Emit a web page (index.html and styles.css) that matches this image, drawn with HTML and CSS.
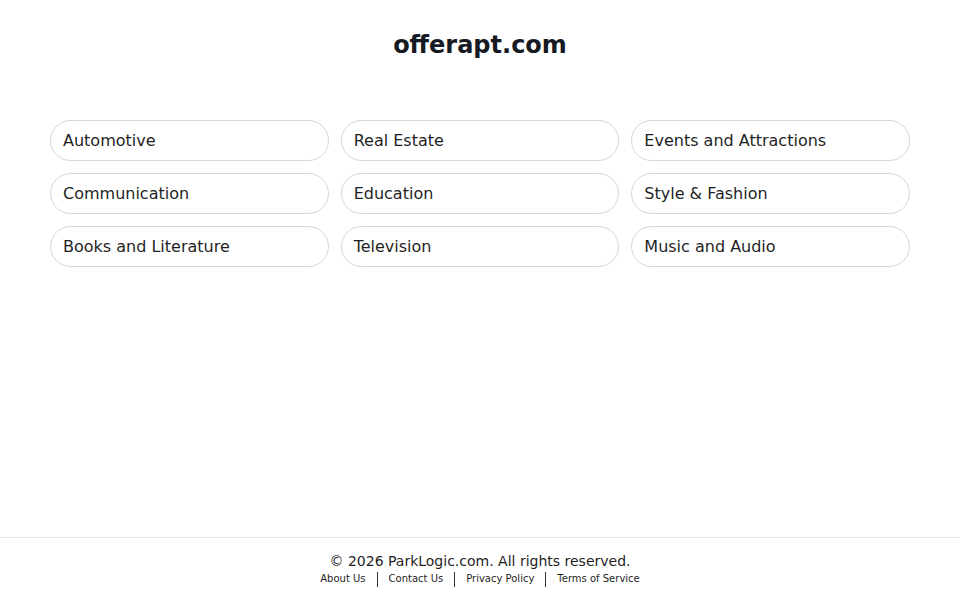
FILE: index.html
```html
<!DOCTYPE html>
<html lang="en">

<head>
    <meta charset="UTF-8">
    <meta name="viewport" content="width=device-width, initial-scale=1.0">
    <title>offerapt.com</title>
    <link rel="stylesheet" href="styles.css">
</head>

<body>
    <div class="page">
        <h1 class="domain">offerapt.com</h1>
        <div class="links">
            <a class="link-item" href="#">Automotive</a>
            <a class="link-item" href="#">Real Estate</a>
            <a class="link-item" href="#">Events and Attractions</a>
            <a class="link-item" href="#">Communication</a>
            <a class="link-item" href="#">Education</a>
            <a class="link-item" href="#">Style &amp; Fashion</a>
            <a class="link-item" href="#">Books and Literature</a>
            <a class="link-item" href="#">Television</a>
            <a class="link-item" href="#">Music and Audio</a>
        </div>
    </div>
    <footer class="footer">
        <div class="copy">© 2026 ParkLogic.com. All rights reserved.</div>
        <div class="footer-nav">
            <a href="#">About Us</a>
            <span class="sep"></span>
            <a href="#">Contact Us</a>
            <span class="sep"></span>
            <a href="#">Privacy Policy</a>
            <span class="sep"></span>
            <a href="#">Terms of Service</a>
        </div>
    </footer>
</body>

</html>
```

FILE: styles.css
```css
html,
body {
    margin: 0;
    height: 100%;
}

body {
    display: flex;
    flex-direction: column;
    font-family: "DejaVu Sans", sans-serif;
    color: #1f1f1f;
    background: #fff;
}

.page {
    flex: 1;
}

.domain {
    margin: 0;
    padding-top: 31px;
    font-size: 24px;
    line-height: 28px;
    font-weight: bold;
    text-align: center;
    color: #161a23;
}

.links {
    display: grid;
    grid-template-columns: repeat(3, 1fr);
    gap: 12px;
    max-width: 860px;
    margin: 61px auto 0;
}

.link-item {
    display: block;
    height: 39px;
    line-height: 39px;
    padding: 0 12px;
    border: 1px solid #d6d6d6;
    border-radius: 21px;
    font-size: 16px;
    color: #1f1f1f;
    text-decoration: none;
}

.footer {
    border-top: 1px solid #e6e6e6;
    height: 63px;
    box-sizing: border-box;
    padding-top: 13px;
    text-align: center;
}

.copy {
    font-size: 14px;
    line-height: 20px;
}

.footer-nav {
    display: flex;
    justify-content: center;
    align-items: center;
    font-size: 10px;
    line-height: 16px;
}

.footer-nav a {
    color: #1f1f1f;
    text-decoration: none;
}

.sep {
    width: 1px;
    height: 15px;
    background: #333;
    margin: 0 11px;
}
```
